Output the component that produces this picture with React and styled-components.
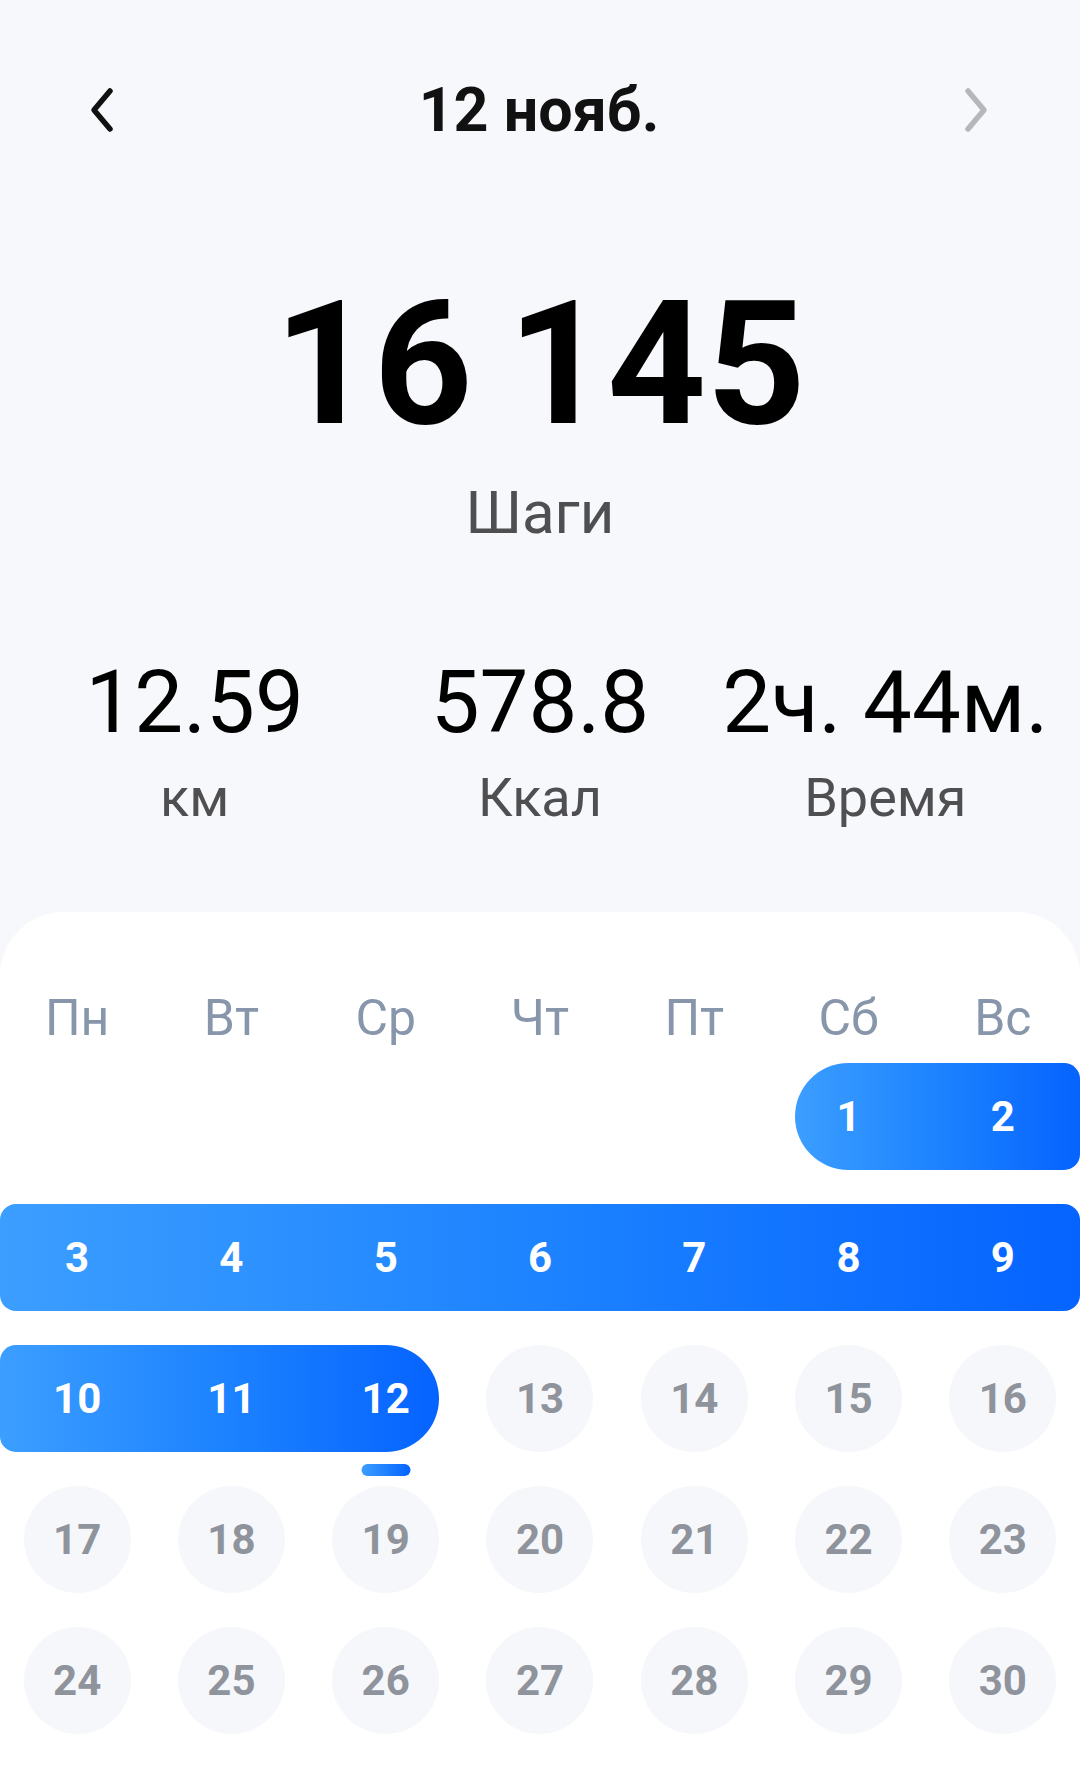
import styled, { createGlobalStyle } from 'styled-components';

const GlobalStyle = createGlobalStyle`
  html, body {
    margin: 0;
    padding: 0;
    background: #f7f8fb;
  }
  body {
    font-family: Roboto, 'Noto Sans', sans-serif;
    -webkit-font-smoothing: antialiased;
  }
`;

const Screen = styled.div`
  width: 1080px;
  min-height: 1780px;
  display: flex;
  flex-direction: column;
  background: #f7f8fb;
`;

const Header = styled.header`
  height: 220px;
  display: flex;
  align-items: center;
  justify-content: space-between;
  padding: 0 88px 0 86px;
`;

const NavIcon = styled.svg`
  width: 32px;
  height: 48px;
  display: block;
  color: ${({ $muted }) => ($muted ? '#b6b7bc' : '#111111')};
`;

const Title = styled.h1`
  margin: 0;
  font-size: 61px;
  line-height: 1;
  font-weight: 700;
  color: #111111;
`;

const Steps = styled.div`
  margin-top: 58px;
  text-align: center;
  font-size: 173px;
  line-height: 1;
  font-weight: 700;
  color: #000000;
  word-spacing: -8px;
`;

const StepsLabel = styled.div`
  margin-top: 32px;
  text-align: center;
  font-size: 60px;
  line-height: 1;
  color: #4f4f52;
`;

const Stats = styled.div`
  margin-top: 116px;
  display: grid;
  grid-template-columns: repeat(3, 1fr);
  padding: 0 22px;
`;

const Stat = styled.div`
  display: flex;
  flex-direction: column;
  align-items: center;
  gap: 25px;
`;

const StatValue = styled.div`
  font-size: 87px;
  line-height: 1;
  color: #000000;
  white-space: nowrap;
`;

const StatLabel = styled.div`
  font-size: 54px;
  line-height: 1;
  color: #4f4f52;
`;

const Card = styled.section`
  margin-top: 87px;
  flex: 1;
  background: #ffffff;
  border-radius: 64px 64px 0 0;
  padding-top: 81px;
  padding-bottom: 40px;
  display: flex;
  flex-direction: column;
`;

const WeekHeader = styled.div`
  display: grid;
  grid-template-columns: repeat(7, 1fr);
`;

const WeekDay = styled.div`
  text-align: center;
  font-size: 50px;
  line-height: 1;
  color: #8796aa;
`;

const Weeks = styled.div`
  margin-top: 20px;
  display: flex;
  flex-direction: column;
  gap: 34px;
`;

const WeekRow = styled.div`
  display: grid;
  grid-template-columns: repeat(7, 1fr);
  grid-template-rows: 107px;
`;

const INSET = (1080 / 7 - 107) / 2;

const RangePill = styled.div`
  grid-row: 1;
  grid-column: ${({ $from, $to }) => `${$from + 1} / ${$to + 2}`};
  margin-left: ${({ $openLeft }) => ($openLeft ? 0 : INSET)}px;
  margin-right: ${({ $openRight }) => ($openRight ? 0 : INSET)}px;
  border-radius: ${({ $openLeft, $openRight }) =>
    `${$openLeft ? 16 : 54}px ${$openRight ? 16 : 54}px ${$openRight ? 16 : 54}px ${$openLeft ? 16 : 54}px`};
  background: linear-gradient(to right, #3c9eff 0%, #1d83ff 50%, #0563ff 100%);
`;

const DayCell = styled.div`
  grid-row: 1;
  grid-column: ${({ $col }) => $col + 1};
  justify-self: center;
  position: relative;
  width: 107px;
  height: 107px;
  border-radius: 50%;
  display: flex;
  align-items: center;
  justify-content: center;
  background: ${({ $selected }) => ($selected ? 'transparent' : '#f6f7fa')};
  color: ${({ $selected }) => ($selected ? '#ffffff' : '#8e939c')};
  font-size: 42px;
  line-height: 1;
  font-weight: 700;
`;

const TodayMark = styled.span`
  position: absolute;
  top: 119px;
  left: 50%;
  transform: translateX(-50%);
  width: 49px;
  height: 12px;
  border-radius: 6px;
  background: linear-gradient(to right, #3c9eff, #0563ff);
`;

const weekDays = ['Пн', 'Вт', 'Ср', 'Чт', 'Пт', 'Сб', 'Вс'];

// ноябрь: 1-е число приходится на субботу
const firstOffset = 5;
const daysInMonth = 30;
const today = 12;
const rangeStart = 1;

function buildWeeks() {
  const cells = Array(firstOffset).fill(null);
  for (let d = 1; d <= daysInMonth; d++) cells.push(d);
  while (cells.length % 7) cells.push(null);
  const weeks = [];
  for (let i = 0; i < cells.length; i += 7) weeks.push(cells.slice(i, i + 7));
  return weeks;
}

function Chevron({ dir, muted }) {
  const d = dir === 'left' ? 'M24 5 L8 24 L24 43' : 'M8 5 L24 24 L8 43';
  return (
    <NavIcon viewBox="0 0 32 48" $muted={muted}>
      <path
        d={d}
        fill="none"
        stroke="currentColor"
        strokeWidth="5.5"
        strokeLinecap="round"
        strokeLinejoin="round"
      />
    </NavIcon>
  );
}

function Week({ days }) {
  const inRange = (d) => d !== null && d >= rangeStart && d <= today;
  const cols = days.map((d, i) => (inRange(d) ? i : -1)).filter((i) => i >= 0);
  const from = cols.length ? cols[0] : -1;
  const to = cols.length ? cols[cols.length - 1] : -1;

  return (
    <WeekRow>
      {from >= 0 && (
        <RangePill
          $from={from}
          $to={to}
          $openLeft={days[from] !== rangeStart}
          $openRight={days[to] !== today}
        />
      )}
      {days.map((d, i) =>
        d === null ? null : (
          <DayCell key={d} $col={i} $selected={inRange(d)}>
            {d}
            {d === today && <TodayMark />}
          </DayCell>
        )
      )}
    </WeekRow>
  );
}

export default function App() {
  const weeks = buildWeeks();
  return (
    <>
      <GlobalStyle />
      <Screen>
        <Header>
          <Chevron dir="left" />
          <Title>12 нояб.</Title>
          <Chevron dir="right" muted />
        </Header>

        <Steps>16 145</Steps>
        <StepsLabel>Шаги</StepsLabel>

        <Stats>
          <Stat>
            <StatValue>12.59</StatValue>
            <StatLabel>км</StatLabel>
          </Stat>
          <Stat>
            <StatValue>578.8</StatValue>
            <StatLabel>Ккал</StatLabel>
          </Stat>
          <Stat>
            <StatValue>2ч. 44м.</StatValue>
            <StatLabel>Время</StatLabel>
          </Stat>
        </Stats>

        <Card>
          <WeekHeader>
            {weekDays.map((w) => (
              <WeekDay key={w}>{w}</WeekDay>
            ))}
          </WeekHeader>
          <Weeks>
            {weeks.map((days, i) => (
              <Week key={i} days={days} />
            ))}
          </Weeks>
        </Card>
      </Screen>
    </>
  );
}
